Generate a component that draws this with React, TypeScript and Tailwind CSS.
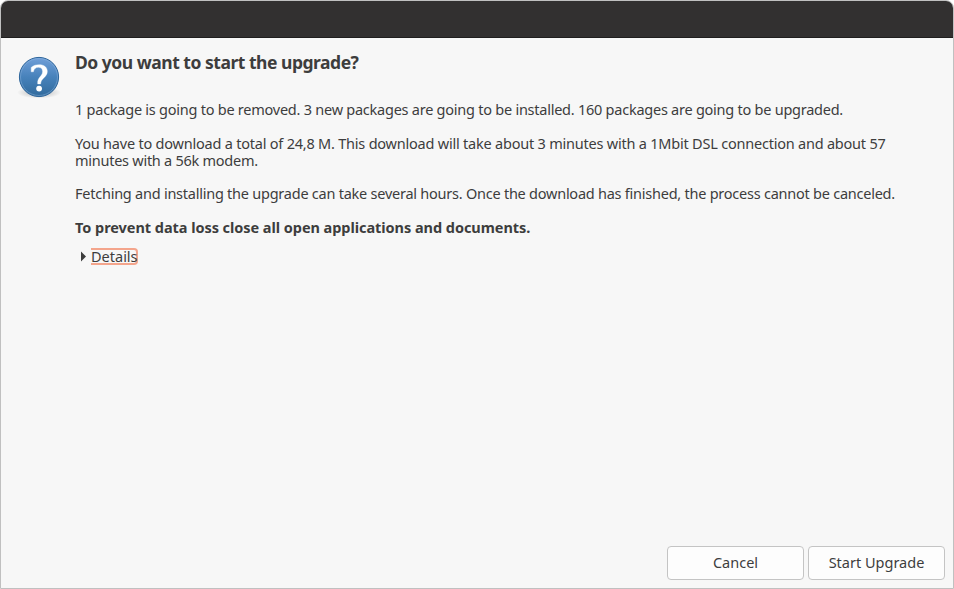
import React from "react";

function QuestionIcon() {
  return (
    <svg width="46" height="46" viewBox="0 0 46 46" className="block">
      <defs>
        <linearGradient id="ball" x1="0" y1="0" x2="0" y2="1">
          <stop offset="0" stopColor="#719fd8" />
          <stop offset="0.5" stopColor="#4782bb" />
          <stop offset="1" stopColor="#316a9c" />
        </linearGradient>
        <radialGradient id="shade">
          <stop offset="0.5" stopColor="#000" stopOpacity="0.14" />
          <stop offset="1" stopColor="#000" stopOpacity="0" />
        </radialGradient>
      </defs>
      <ellipse cx="23" cy="37.5" rx="22" ry="6" fill="url(#shade)" />
      <circle cx="23" cy="22" r="19.6" fill="url(#ball)" stroke="#2d659b" strokeWidth="1" />
      <circle cx="23" cy="22" r="18.5" fill="none" stroke="#8fb5df" strokeOpacity="0.45" strokeWidth="1" />
      <path
        d="M15.2 16.8 V12.4 C17.5 10.4 20 9.7 23.2 9.7 C28.2 9.7 31.3 12.4 31.3 16.4 C31.3 22.2 24.9 22.8 24.6 28.9 H21.7 C21.1 22.1 26.6 21.4 26.6 16.6 C26.6 13.8 25 12.3 22.3 12.3 C19.6 12.3 17.9 13.8 17.4 16.8 Z"
        fill="#fff"
        stroke="#fff"
        strokeWidth="0.4"
      />
      <circle cx="23.1" cy="33.6" r="2.9" fill="#fff" />
    </svg>
  );
}

function DialogButton({ children }: { children: React.ReactNode }) {
  return (
    <button className="h-[34px] w-[137px] rounded-[4px] border border-[#c4c4c4] bg-[#fdfdfd] pb-[2px] text-[14.5px]">
      {children}
    </button>
  );
}

export default function App() {
  return (
    <div className="h-[589px] w-[954px] bg-white font-['Noto_Sans',sans-serif] text-[14.5px] leading-[17px] text-[#3d3d3d]">
      <div className="flex h-full flex-col overflow-hidden rounded-t-[8px] border border-[#c0c0c0] bg-[#f7f7f7]">
        <header className="h-[37px] shrink-0 border-b border-[#1f1e1e] bg-[#323030]" />
        <main className="flex flex-1 pl-[15px] pt-[17px]">
          <div className="w-[59px] shrink-0">
            <QuestionIcon />
          </div>
          <div className="flex flex-col items-start whitespace-nowrap">
            <h1 className="-mt-[4px] h-[22px] text-[17.5px] font-bold leading-[22px] tracking-[-0.48px]">Do you want to start the upgrade?</h1>
            <p className="mt-[28px] tracking-[-0.245px]">1 package is going to be removed. 3 new packages are going to be installed. 160 packages are going to be upgraded.</p>
            <p className="mt-[17px] tracking-[-0.217px]">
              You have to download a total of 24,8 M. This download will take about 3 minutes with a 1Mbit DSL connection and about 57
              <br />
              <span className="tracking-[-0.26px]">minutes with a 56k modem.</span>
            </p>
            <p className="mt-[16px] tracking-[-0.242px]">Fetching and installing the upgrade can take several hours. Once the download has finished, the process cannot be canceled.</p>
            <p className="mt-[17px] font-bold tracking-[-0.05px]">To prevent data loss close all open applications and documents.</p>
            <div className="mt-[12px] flex items-center">
              <svg width="16" height="17" viewBox="0 0 16 17">
                <path d="M6 3.5 L11 8.5 L6 13.5 Z" fill="#3d3d3d" />
              </svg>
              <span className="h-[17px] w-[47px] rounded-r-[4px] border-y-2 border-r-2 border-[#f4a58c]">
                <span className="-mt-[2px] block">Details</span>
              </span>
            </div>
          </div>
        </main>
        <footer className="flex justify-end gap-1 pb-2 pr-2">
          <DialogButton>Cancel</DialogButton>
          <DialogButton>Start Upgrade</DialogButton>
        </footer>
      </div>
    </div>
  );
}
